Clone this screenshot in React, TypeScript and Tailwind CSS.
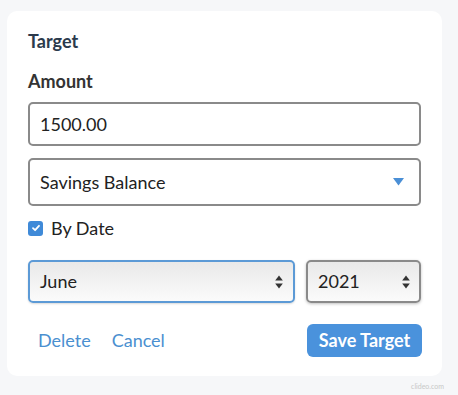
import React from "react"

function UpDown() {
  return (
    <svg width="8" height="14" viewBox="0 0 8 14" className="shrink-0">
      <path d="M4 0.5 L7.8 5.5 L0.2 5.5 Z" fill="#333" />
      <path d="M4 13.5 L7.8 8.5 L0.2 8.5 Z" fill="#333" />
    </svg>
  )
}

export default function App() {
  return (
    <div
      className="w-[458px] h-[395px] bg-[#f6f7f9] relative overflow-hidden"
      style={{ fontFamily: "Lato, 'Open Sans', sans-serif" }}
    >
      <div className="ml-[7px] pt-[11px]">
        <div className="w-[435px] h-[365px] rounded-[10px] bg-white pt-[20px] px-[21px]">
          {/* Title */}
          <p className="text-[18px] leading-[20px] font-bold text-[#2b3a4c]">Target</p>
          <p className="mt-[19px] text-[18px] leading-[22px] font-bold text-[#333]">Amount</p>

          {/* Amount input */}
          <div className="mt-[10px] h-[44px] w-[393px] rounded-[5px] border-2 border-[#8a8a8a] flex items-center px-[10px]">
            <span className="text-[18px] text-[#222]">1500.00</span>
          </div>

          {/* Balance select */}
          <div className="mt-[12px] h-[48px] w-[393px] rounded-[5px] border-2 border-[#8a8a8a] flex items-center justify-between pl-[10px] pr-[15px]">
            <span className="text-[18px] text-[#222]">Savings Balance</span>
            <svg width="11" height="8" viewBox="0 0 11 8">
              <path d="M0 0 L11 0 L5.5 7.5 Z" fill="#4a8fd6" />
            </svg>
          </div>

          {/* Checkbox */}
          <div className="mt-[12px] h-[20px] flex items-center gap-[8px]">
            <span className="w-[15px] h-[15px] rounded-[3px] bg-[#3f8ad8] flex items-center justify-center">
              <svg width="10" height="10" viewBox="0 0 10 10">
                <path d="M2 5.2 L4.1 7.2 L8 2.8" stroke="white" strokeWidth="1.8" fill="none" strokeLinecap="round" strokeLinejoin="round" />
              </svg>
            </span>
            <span className="text-[18px] text-[#222]">By Date</span>
          </div>

          {/* Date selects */}
          <div className="mt-[22px] flex gap-[11px]">
            <div className="h-[43px] w-[267px] rounded-[5px] border-2 border-[#5c9ad6] bg-gradient-to-b from-[#e9e9e9] to-[#fbfbfb] flex items-center justify-between pl-[10px] pr-[10px] shadow-[0_1px_2px_rgba(0,0,0,0.15)]">
              <span className="text-[18px] text-[#222]">June</span>
              <UpDown />
            </div>
            <div className="h-[43px] w-[115px] rounded-[5px] border-2 border-[#8a8a8a] bg-gradient-to-b from-[#e9e9e9] to-[#fbfbfb] flex items-center justify-between pl-[10px] pr-[9px] shadow-[0_1px_3px_rgba(0,0,0,0.25)]">
              <span className="text-[18px] text-[#222]">2021</span>
              <UpDown />
            </div>
          </div>

          {/* Actions */}
          <div className="mt-[21px] flex items-center justify-between w-[394px]">
            <div className="flex items-center gap-[21px] pl-[10px]">
              <button className="text-[18px] text-[#4a8fd0]">Delete</button>
              <button className="text-[18px] text-[#4a8fd0]">Cancel</button>
            </div>
            <button className="h-[33px] w-[115px] rounded-[6px] bg-[#4a92dc] text-white text-[18px] font-bold">
              Save Target
            </button>
          </div>
        </div>
      </div>
      <span className="absolute right-[14px] bottom-[4px] text-[7px] text-[#c8c8c8]">clideo.com</span>
    </div>
  )
}
